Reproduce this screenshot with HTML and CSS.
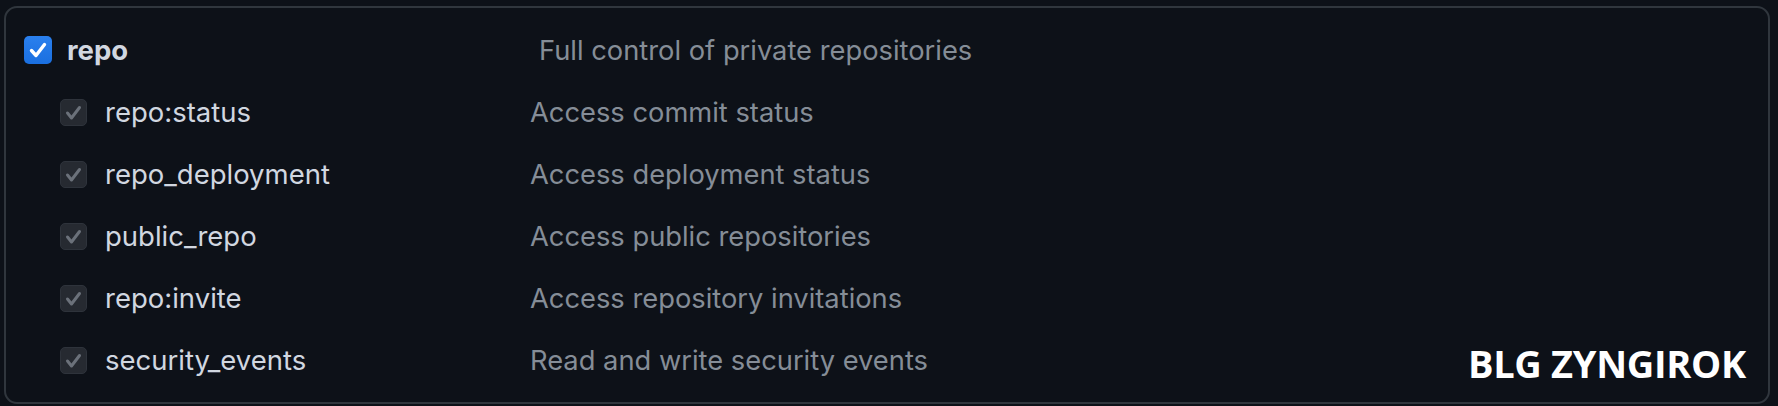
FILE: index.html
```html
<!DOCTYPE html>
<html lang="en">
<head>
<meta charset="utf-8">
<title>Token scopes</title>
<link rel="stylesheet" href="styles.css">
</head>
<body>
<div class="panel">
  <div class="row row-main">
    <span class="check check-on">
      <svg viewBox="0 0 28 28" width="28" height="28"><path d="M7.5 14.5 L12 19.5 L20.5 8.5" fill="none" stroke="#ffffff" stroke-width="3.4" stroke-linecap="round" stroke-linejoin="round"/></svg>
    </span>
    <span class="label label-main">repo</span>
    <span class="desc">Full control of private repositories</span>
  </div>
  <div class="row row-sub">
    <span class="check check-dis"><svg viewBox="0 0 27 27" width="27" height="27"><path d="M7.5 14 L11.5 19 L19.5 8.5" fill="none" stroke="#6b717a" stroke-width="3" stroke-linecap="round" stroke-linejoin="round"/></svg></span>
    <span class="label">repo:status</span>
    <span class="desc">Access commit status</span>
  </div>
  <div class="row row-sub">
    <span class="check check-dis"><svg viewBox="0 0 27 27" width="27" height="27"><path d="M7.5 14 L11.5 19 L19.5 8.5" fill="none" stroke="#6b717a" stroke-width="3" stroke-linecap="round" stroke-linejoin="round"/></svg></span>
    <span class="label">repo_deployment</span>
    <span class="desc">Access deployment status</span>
  </div>
  <div class="row row-sub">
    <span class="check check-dis"><svg viewBox="0 0 27 27" width="27" height="27"><path d="M7.5 14 L11.5 19 L19.5 8.5" fill="none" stroke="#6b717a" stroke-width="3" stroke-linecap="round" stroke-linejoin="round"/></svg></span>
    <span class="label">public_repo</span>
    <span class="desc">Access public repositories</span>
  </div>
  <div class="row row-sub">
    <span class="check check-dis"><svg viewBox="0 0 27 27" width="27" height="27"><path d="M7.5 14 L11.5 19 L19.5 8.5" fill="none" stroke="#6b717a" stroke-width="3" stroke-linecap="round" stroke-linejoin="round"/></svg></span>
    <span class="label">repo:invite</span>
    <span class="desc">Access repository invitations</span>
  </div>
  <div class="row row-sub">
    <span class="check check-dis"><svg viewBox="0 0 27 27" width="27" height="27"><path d="M7.5 14 L11.5 19 L19.5 8.5" fill="none" stroke="#6b717a" stroke-width="3" stroke-linecap="round" stroke-linejoin="round"/></svg></span>
    <span class="label">security_events</span>
    <span class="desc">Read and write security events</span>
  </div>
  <div class="watermark">BLG ZYNGIROK</div>
</div>
</body>
</html>
```

FILE: styles.css
```css
html, body {
  margin: 0;
  padding: 0;
  background: #0d1118;
}
body {
  font-family: "Inter", "Noto Sans", sans-serif;
  width: 1778px;
  height: 406px;
  overflow: hidden;
}
.panel {
  position: relative;
  box-sizing: border-box;
  margin: 6px 0 0 4px;
  width: 1766px;
  height: 398px;
  border: 2px solid #30363d;
  border-radius: 13px;
  padding-top: 11px;
}
.row {
  display: flex;
  align-items: center;
  height: 62px;
}
.row-main {
  padding-left: 18px;
}
.row-sub {
  padding-left: 54px;
}
.check {
  flex: none;
  display: flex;
  box-sizing: border-box;
  border-radius: 5px;
}
.check-on {
  width: 28px;
  height: 28px;
  background: linear-gradient(#2a80ee, #1a6fe0);
}
.check-dis {
  width: 27px;
  height: 27px;
  background: #262a31;
  border: 1px solid #2e333b;
}
.check-dis svg {
  margin: -1px;
}
.label {
  flex: none;
  color: #d1d7e0;
  font-size: 27.5px;
}
.row-main .label {
  margin-left: 15px;
  width: 472px;
  font-weight: 700;
}
.row-sub .label {
  margin-left: 18px;
  width: 425px;
}
.desc {
  color: #858d97;
  font-size: 27.3px;
}
.watermark {
  position: absolute;
  right: 22px;
  bottom: 13px;
  font-family: "Open Sans", sans-serif;
  font-weight: 700;
  font-size: 38px;
  line-height: normal;
  color: #ffffff;
  letter-spacing: -0.3px;
}
```
